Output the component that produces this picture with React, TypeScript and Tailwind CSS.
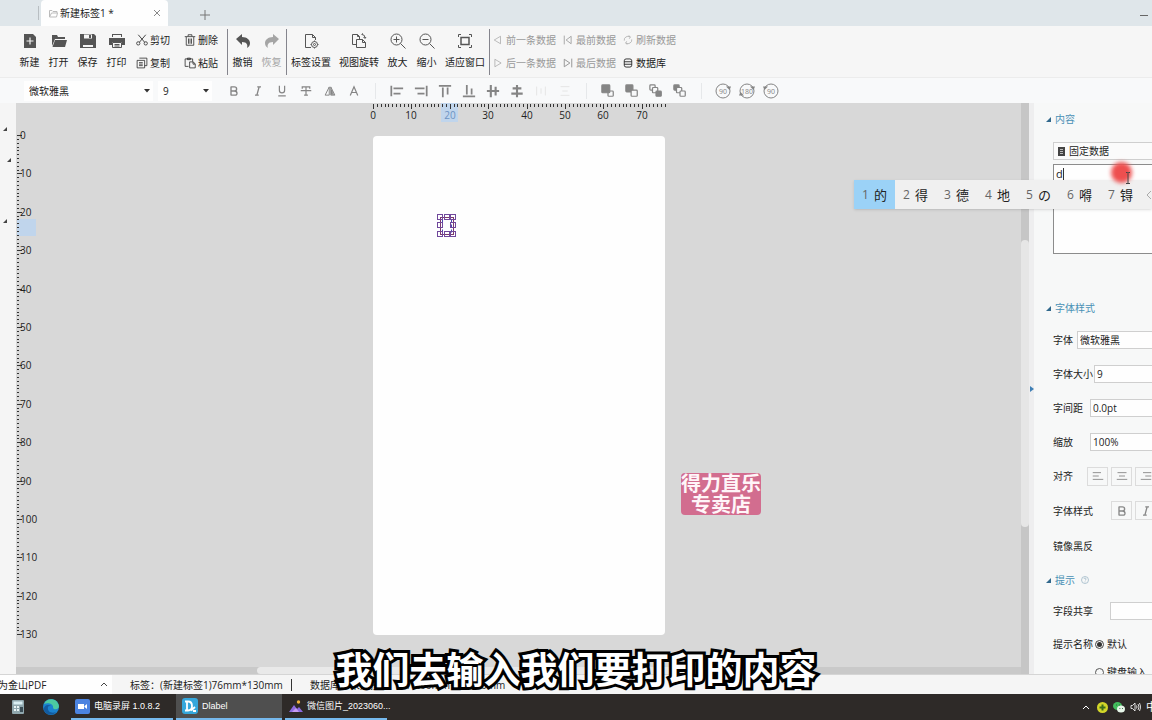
import type { ReactNode } from "react"

const PX_PER_MM = 3.84

type IconProps = { children: ReactNode; size?: string; box?: number; fill?: boolean }

function Icon({ children, size = "w-4 h-4", box = 16, fill = false }: IconProps) {
  return (
    <svg
      viewBox={`0 0 ${box} ${box}`}
      className={`${size} shrink-0`}
      fill={fill ? "currentColor" : "none"}
      stroke={fill ? "none" : "currentColor"}
      strokeWidth={1}
      aria-hidden="true"
    >
      {children}
    </svg>
  )
}

const icons = {
  add: (
    <Icon fill>
      <path d="M2 1h9l3 3v11H2z" />
      <path d="M8 4.500v7M4.500 8h7" stroke="#f6f6f6" strokeWidth="1.200" />
    </Icon>
  ),
  open: (
    <Icon fill>
      <path d="M1 2h5l1 2h7v2H4L1 13z" />
      <path d="M4 7h12l-2 7H1.500z" />
    </Icon>
  ),
  save: (
    <Icon fill>
      <path d="M0 1h14l2 2v12H0z" />
      <path d="M4 1.500h8v4H4zM3 9h10v5H3z" fill="#f6f6f6" />
      <path d="M9 2h2v3H9zM3 9h10v3H3z" />
    </Icon>
  ),
  print: (
    <Icon fill>
      <path d="M3 1h10v3H3zM0 5h16v7h-3V9H3v3H0z" />
      <path d="M3.500 9.500h9v5h-9z" fill="#f6f6f6" stroke="currentColor" />
      <path d="M5.500 11h5v1h-5zM5.500 12.500h5v1h-5z" />
      <path d="M4 2h8v2H4z" fill="#f6f6f6" />
    </Icon>
  ),
  undo: (
    <Icon fill>
      <path d="M1 6l6-5v3c5 0 8 3 8 6 0 2-1 4-3 5 1-3 0-6-5-6v3z" />
    </Icon>
  ),
  redo: (
    <Icon fill>
      <path d="M15 6L9 1v3C4 4 1 7 1 10c0 2 1 4 3 5-1-3 0-6 5-6v3z" />
    </Icon>
  ),
  labelSet: (
    <Icon>
      <path d="M8 14.500H2.500v-13h7l3 3V7M9.500 1.500v3h3" />
      <circle cx="11.500" cy="11.500" r="3" />
      <circle cx="11.500" cy="11.500" r="1" />
      <path d="M11.500 7.500v1M11.500 14.500v1M7.500 11.500h1M14.500 11.500h1" />
    </Icon>
  ),
  viewRotate: (
    <Icon>
      <path d="M5 11.500H1.500v-10h5l2 2V6M6.500 1.500v2h2" />
      <path d="M5.500 6.500h6l3 3v5h-9zM11.500 6.500v3h3M11 1.500q3 0 3 3.500M10.500 1.500l1.500-1M12.500 4l1.500 1.500 1-1.500" />
    </Icon>
  ),
  zoomIn: (
    <Icon>
      <circle cx="6.500" cy="6.500" r="5.500" />
      <path d="M10.500 10.500l5 5M6.500 3.500v6M3.500 6.500h6" />
    </Icon>
  ),
  zoomOut: (
    <Icon>
      <circle cx="6.500" cy="6.500" r="5.500" />
      <path d="M10.500 10.500l5 5M3.500 6.500h6" />
    </Icon>
  ),
  fit: (
    <Icon>
      <path d="M4 4.500h8v7H4z" strokeWidth="1.500" />
      <path d="M1.500 4V1.500H4M12 1.500h2.500V4M14.500 12v2.500H12M4 14.500H1.500V12" />
    </Icon>
  ),
  cut: (
    <Icon size="w-3 h-3">
      <circle cx="3" cy="12.500" r="2.200" />
      <circle cx="13" cy="12.500" r="2.200" />
      <path d="M4.500 11L13 1M11.500 11L3 1" strokeWidth="1.100" />
    </Icon>
  ),
  copy: (
    <Icon size="w-3 h-3">
      <path d="M4.500 1.500h10v10h-3M1.500 4.500h10v10h-10zM4 7.500h5M4 9.500h5M4 11.500h5" />
    </Icon>
  ),
  trash: (
    <Icon size="w-3 h-3">
      <path d="M1 3.500h14M5.500 3V1h5v2M3 4v11h10V4M6 6v7M8 6v7M10 6v7" />
    </Icon>
  ),
  paste: (
    <Icon size="w-3 h-3">
      <path d="M6 12.500H1.500v-10h10V6M4.500 1.500h4v2h-4zM7.500 6.500h5l2.500 3v5H7.500zM12 6.500v3h3" />
    </Icon>
  ),
  prev: (
    <Icon size="w-2.5 h-2.5">
      <path d="M12 2v12L2 8z" />
    </Icon>
  ),
  next: (
    <Icon size="w-2.5 h-2.5">
      <path d="M3 2v12l10-6z" />
    </Icon>
  ),
  first: (
    <Icon size="w-2.5 h-2.5">
      <path d="M13 2v12L5 8zM2 1v14" strokeWidth="1.300" />
    </Icon>
  ),
  last: (
    <Icon size="w-2.5 h-2.5">
      <path d="M2 2v12l9-6zM14 1v14" strokeWidth="1.600" />
    </Icon>
  ),
  refresh: (
    <Icon size="w-2.5 h-2.5">
      <path d="M2 9a6 6 0 0 1 9-6M14 7a6 6 0 0 1-9 6M9 1l3 2-2 3M7 15l-3-2 2-3" />
    </Icon>
  ),
  database: (
    <Icon size="w-2.5 h-2.5">
      <rect x="2" y="1.500" width="12" height="13" rx="3" strokeWidth="1.400" />
      <path d="M2 6h12M2 10h12" strokeWidth="1.400" />
    </Icon>
  ),
}

const fileTools = [
  { label: "新建", icon: icons.add },
  { label: "打开", icon: icons.open },
  { label: "保存", icon: icons.save },
  { label: "打印", icon: icons.print },
]

const editTools = [
  { label: "剪切", icon: icons.cut },
  { label: "删除", icon: icons.trash },
  { label: "复制", icon: icons.copy },
  { label: "粘贴", icon: icons.paste },
]

const viewTools = [
  { label: "标签设置", icon: icons.labelSet, wide: true },
  { label: "视图旋转", icon: icons.viewRotate, wide: true },
  { label: "放大", icon: icons.zoomIn },
  { label: "缩小", icon: icons.zoomOut },
  { label: "适应窗口", icon: icons.fit, wide: true },
]

const dataTools = [
  { label: "前一条数据", icon: icons.prev },
  { label: "最前数据", icon: icons.first },
  { label: "刷新数据", icon: icons.refresh },
  { label: "后一条数据", icon: icons.next },
  { label: "最后数据", icon: icons.last },
  { label: "数据库", icon: icons.database, active: true },
]

const textFormats = [
  { name: "加粗", d: "M4 2v12M4 2.500h4.500q3 0 3 2.700T8.500 8H4M8.500 8q3.500 0 3.500 3t-3.500 2.500H4", w: 1.8 },
  { name: "斜体", d: "M7 2.500h5M4 13.500h5M9.500 2.500l-3 11", w: 1.8 },
  { name: "下划线", d: "M4.500 1v6q0 3.500 3.500 3.500T11.500 7V1M3 14.500h10", w: 1.6 },
  { name: "删除线", d: "M3 5v-2.500h10V5M8 2.500v11M5.500 13.500h5M1 7.500h14", w: 1.6 },
  { name: "镜像", d: "M7 2.500v11H1.500zM9 2.500v11h5.500zM10 13V6M11 13V8M12 13v-3M13 13v-1", w: 1.3 },
  { name: "字形", d: "M3 14L8 2.500 13 14M5 10h6", w: 1.6 },
]

const alignFormats = [
  { name: "左对齐", d: "M1.500 2v12M4 5h11M4 11h8", w: 2 },
  { name: "右对齐", d: "M14.500 2v12M1 5h11M4 11h8", w: 2 },
  { name: "顶对齐", d: "M1 2h14M5.500 4v11M11 4v8", w: 2 },
  { name: "底对齐", d: "M1 14h14M5.500 1v11M11 5v7", w: 2 },
  { name: "垂直居中", d: "M1 8h14M5.500 1v14M11 3v10", w: 2.4 },
  { name: "水平居中", d: "M8 1v14M3 5h10M1.500 11h13", w: 2.4 },
  { name: "横向分布", d: "M3 3v10M8 5v6M13 3v10", w: 1, faint: true },
  { name: "纵向分布", d: "M3 3h10M5 8h6M3 13h10", w: 1, faint: true },
]

// Stacking order buttons, squares as [x, y, size, filled]
const layers: { name: string; squares: [number, number, number, boolean][] }[] = [
  { name: "置于顶层", squares: [[8, 8, 6, false], [1, 1, 9, true]] },
  { name: "置于底层", squares: [[1, 1, 8, true], [7, 7, 7, false]] },
  { name: "上移一层", squares: [[1, 1, 6, false], [4, 4, 6, false], [8, 8, 6, true]] },
  { name: "下移一层", squares: [[1, 1, 6, true], [4, 4, 6, false], [8, 8, 6, false]] },
]

const candidates = ["的", "得", "德", "地", "の", "嘚", "锝"]

function BigButton({ label, icon, wide, muted }: { label: string; icon: ReactNode; wide?: boolean; muted?: boolean }) {
  return (
    <button
      className={`flex flex-col items-center gap-[5px] whitespace-nowrap ${wide ? "w-12" : "w-[29px]"} ${
        muted ? "text-[#a5a5a5]" : "text-[#555]"
      }`}
    >
      {icon}
      <span className={muted ? "leading-4" : "leading-4 text-[#222]"}>{label}</span>
    </button>
  )
}

function Divider() {
  return <div className="w-px self-stretch bg-[#85858d]" />
}

function FormatSeparator() {
  return <div className="mx-[9px] h-4 w-px bg-[#e6e8ea]" />
}

function FormatButton({ name, children, faint }: { name: string; children: ReactNode; faint?: boolean }) {
  return (
    <button aria-label={name} className={`flex w-6 justify-center ${faint ? "text-[#e2e2e2]" : "text-[#858585]"}`}>
      {children}
    </button>
  )
}

function RotateIcon({ text, flip, both }: { text: string; flip?: boolean; both?: boolean }) {
  return (
    <svg viewBox="0 0 18 18" className="h-[18px] w-[18px]" fill="none" stroke="currentColor" aria-hidden="true">
      <circle cx="9" cy="9" r="7" />
      {!flip && <path d="M12 4.500h5l-1.500 3.500z" fill="currentColor" stroke="none" />}
      {flip && <path d="M6 4.500H1L2.500 8z" fill="currentColor" stroke="none" />}
      {both && <path d="M6 13.500H1L2.500 10z" fill="currentColor" stroke="none" />}
      <text x="9" y="11.500" textAnchor="middle" fontSize="7" fill="currentColor" stroke="none">
        {text}
      </text>
    </svg>
  )
}

function Toolbar() {
  return (
    <div className="flex h-[51px] items-center bg-[#f6f6f6] pl-[15px]">
      <div className="flex">
        {fileTools.map((t) => (
          <BigButton key={t.label} {...t} />
        ))}
      </div>
      <div className="ml-[5px] grid grid-cols-[48px_auto] gap-y-[7px] pr-2">
        {editTools.map((t) => (
          <button key={t.label} className="flex items-center gap-[2px] leading-4 text-[#222]">
            {t.icon}
            {t.label}
          </button>
        ))}
      </div>
      <div className="ml-px flex h-[46px] items-center">
        <Divider />
        <BigButton label="撤销" icon={icons.undo} />
        <BigButton label="恢复" icon={icons.redo} muted />
        <Divider />
        {viewTools.map((t) => (
          <BigButton key={t.label} {...t} />
        ))}
        <Divider />
      </div>
      <div className="ml-[3px] grid grid-cols-[70px_60px_auto] gap-y-[7px] whitespace-nowrap">
        {dataTools.map((t) => (
          <button
            key={t.label}
            className={`flex items-center gap-[3px] leading-4 ${t.active ? "text-[#222]" : "text-[#999]"}`}
          >
            {t.icon}
            {t.label}
          </button>
        ))}
      </div>
    </div>
  )
}

function SelectBox({ label, value, className }: { label: string; value: string; className: string }) {
  return (
    <div className={`flex items-center bg-[#fefefe] ${className}`}>
      <select aria-label={label} className="min-w-0 flex-1 appearance-none bg-transparent pl-[5px] text-[#222]">
        <option>{value}</option>
      </select>
      <svg viewBox="0 0 6 4" className="mr-[3px] h-1 w-1.5" fill="#333" aria-hidden="true">
        <path d="M0 0h6L3 3.500z" />
      </svg>
    </div>
  )
}

function FormatBar() {
  return (
    <div className="flex h-[26px] items-center border-t border-[#ececec] bg-[#f8f9fa] pl-6">
      <SelectBox label="字体" value="微软雅黑" className="h-5 w-[129px]" />
      <SelectBox label="字号" value="9" className="ml-[5px] mr-[10px] h-5 w-[54px]" />
      {textFormats.map((f) => (
        <FormatButton key={f.name} name={f.name}>
          <Icon size="w-3 h-3">
            <path d={f.d} strokeWidth={f.w} />
          </Icon>
        </FormatButton>
      ))}
      <FormatSeparator />
      {alignFormats.map((f) => (
        <FormatButton key={f.name} name={f.name} faint={f.faint}>
          <Icon size="w-[14px] h-[14px]">
            <path d={f.d} strokeWidth={f.w} />
          </Icon>
        </FormatButton>
      ))}
      <FormatSeparator />
      {layers.map((l) => (
        <FormatButton key={l.name} name={l.name}>
          <Icon size="w-[14px] h-[14px]">
            {l.squares.map(([x, y, size, filled], i) => (
              <rect
                key={i}
                x={x}
                y={y}
                width={size}
                height={size}
                rx="1"
                fill={filled ? "currentColor" : "#f8f9fa"}
                strokeWidth="1.400"
              />
            ))}
          </Icon>
        </FormatButton>
      ))}
      <FormatSeparator />
      <FormatButton name="旋转90">
        <RotateIcon text="90" />
      </FormatButton>
      <FormatButton name="旋转180">
        <RotateIcon text="180" both />
      </FormatButton>
      <FormatButton name="反向旋转90">
        <RotateIcon text="90" flip />
      </FormatButton>
    </div>
  )
}

function HorizontalRuler() {
  const marks = Array.from({ length: 77 }, (_, mm) => mm)
  return (
    <svg className="h-[33px] w-full overflow-visible" aria-hidden="true">
      <rect x="68" y="0" width="17" height="19" fill="#c0d5ec" />
      {marks.map((mm) => (
        <rect
          key={mm}
          x={Math.round(mm * PX_PER_MM)}
          y={1}
          width="1"
          height={mm % 10 === 0 ? 5 : 3}
          fill="#333"
        />
      ))}
      {marks
        .filter((mm) => mm % 10 === 0)
        .map((mm) => (
          <text
            key={mm}
            x={Math.round(mm * PX_PER_MM)}
            y="16"
            textAnchor="middle"
            fontSize="10"
            fill={mm === 20 ? "#6d93c4" : "#222"}
          >
            {mm}
          </text>
        ))}
    </svg>
  )
}

function VerticalRuler() {
  const marks = Array.from({ length: 131 }, (_, mm) => mm)
  return (
    <svg className="h-full w-8" aria-hidden="true">
      <rect x="1" y="116" width="19" height="17" fill="#c0d5ec" />
      {marks.map((mm) => (
        <rect
          key={mm}
          x="1"
          y={Math.round(mm * PX_PER_MM) + 32}
          width={mm % 10 === 0 ? 5 : 2}
          height="1"
          fill="#333"
        />
      ))}
      {marks
        .filter((mm) => mm % 10 === 0)
        .map((mm) => (
          <text key={mm} x="4" y={Math.round(mm * PX_PER_MM) + 36} fontSize="10" fill="#222">
            {mm}
          </text>
        ))}
    </svg>
  )
}

function Selection() {
  const handles = [
    [0, 0], [7, 0], [13, 0],
    [0, 8], [13, 8],
    [0, 17], [7, 17], [13, 17],
  ]
  return (
    <svg
      viewBox="0 0 20 24"
      className="absolute left-16 top-[78px] h-6 w-5"
      fill="none"
      stroke="#70489c"
      aria-hidden="true"
    >
      <rect x="3.500" y="3.500" width="13" height="17" stroke="#7d3b6b" />
      <path d="M5.500 5.500v13M14.500 5.500v13" stroke="#4a4ab0" strokeDasharray="3 2" />
      {handles.map(([x, y]) => (
        <rect key={`${x}-${y}`} x={x + 0.5} y={y + 0.5} width="5" height="5" />
      ))}
    </svg>
  )
}

function Workspace() {
  return (
    <div className="flex min-w-0 flex-1 flex-col bg-[#d8d8d8]">
      <div className="relative flex min-h-0 flex-1">
        <VerticalRuler />
        <div className="flex flex-1 justify-center">
          <div className="w-[292px]">
            <HorizontalRuler />
            <div className="relative h-[499px] rounded-sm bg-[#fefefe]">
              <Selection />
            </div>
          </div>
        </div>
        <div className="w-8" />
        <div className="absolute right-[260px] top-[370px] rounded bg-[#d26d8f] text-center text-[20px] font-bold leading-[21px] text-[#fff5f8]">
          得力直乐
          <br />
          专卖店
        </div>
      </div>
      <div className="flex h-[7px] justify-center bg-[#c9c9c9]">
        <div className="w-[52%] rounded-sm bg-[#e9e9e9]" />
      </div>
    </div>
  )
}

function SectionTitle({ children, className }: { children: ReactNode; className: string }) {
  return (
    <h2 className={`flex items-center gap-1 pl-3 text-[#4990b5] ${className}`}>
      <svg viewBox="0 0 5 5" className="h-[5px] w-[5px]" fill="#31688c" aria-hidden="true">
        <path d="M5 0v5H0z" />
      </svg>
      {children}
    </h2>
  )
}

function Field({ id, label, value, width }: { id: string; label: string; value: string; width: string }) {
  return (
    <div className="flex h-[34px] items-center pl-[19px]">
      <label htmlFor={id} className={`shrink-0 ${width}`}>
        {label}
      </label>
      <input
        id={id}
        defaultValue={value}
        className="h-[18px] w-24 shrink-0 border border-[#cfcfcf] bg-[#fefefe] px-0.5"
      />
    </div>
  )
}

function SquareButton({ name, d, w = 1.2 }: { name: string; d: string; w?: number }) {
  return (
    <button
      aria-label={name}
      className="flex h-[19px] w-[21px] shrink-0 items-center justify-center border border-[#dcdcdc] text-[#888]"
    >
      <Icon size="w-3 h-3">
        <path d={d} strokeWidth={w} />
      </Icon>
    </button>
  )
}

function PropertyPanel() {
  return (
    <aside className="w-[118px] shrink-0 overflow-hidden whitespace-nowrap bg-[#f7f8f8] text-[#222]">
      <SectionTitle className="h-8">内容</SectionTitle>
      <div className="mt-[7px] flex w-48 flex-col gap-1 pl-[19px]">
        <button className="flex h-[18px] items-center gap-1 border border-[#cfcfcf] bg-[#fbfbfb] pl-1">
          <svg viewBox="0 0 7 9" className="h-[9px] w-[7px]" aria-hidden="true">
            <path d="M0 0h7v9H0z" fill="#444" />
            <path d="M2 2.500h3M2 4.500h3M2 6.500h3" stroke="#bbb" />
          </svg>
          固定数据
        </button>
        <textarea
          aria-label="数据内容"
          defaultValue="d"
          className="block h-[90px] resize-none border border-[#8c8c8c] bg-[#fefefe] px-[2px] py-px text-[11px] leading-4"
        />
      </div>

      <SectionTitle className="mt-[39px] h-[30px]">字体样式</SectionTitle>
      <div className="flex h-[34px] items-center pl-[19px]">
        <label htmlFor="font" className="w-6 shrink-0">
          字体
        </label>
        <select id="font" className="h-[18px] w-28 shrink-0 appearance-none border border-[#cfcfcf] bg-[#fefefe] px-0.5">
          <option>微软雅黑</option>
        </select>
      </div>
      <Field id="size" label="字体大小" value="9" width="w-[41px]" />
      <Field id="spacing" label="字间距" value="0.0pt" width="w-[37px]" />
      <Field id="scale" label="缩放" value="100%" width="w-[37px]" />
      <div className="flex h-[34px] items-center gap-[3px] pl-[19px]">
        <span className="w-[31px] shrink-0">对齐</span>
        <SquareButton name="居左" d="M1 3.500h11M1 8h8M1 12.500h14" />
        <SquareButton name="居中" d="M2 3.500h12M4 8h8M1 12.500h14" />
        <SquareButton name="居右" d="M4 3.500h11M7 8h8M1 12.500h14" />
      </div>
      <div className="flex h-[35px] items-center gap-[3px] pl-[19px]">
        <span className="w-[55px] shrink-0">字体样式</span>
        <SquareButton name="粗体" d={textFormats[0].d} w={1.8} />
        <SquareButton name="倾斜" d={textFormats[1].d} w={1.8} />
      </div>
      <div className="flex h-[35px] items-center pl-[19px]">镜像黑反</div>

      <SectionTitle className="h-[34px]">
        提示
        <svg viewBox="0 0 8 8" className="ml-0.5 h-2 w-2" fill="none" stroke="#9fb9c8" strokeWidth="0.800" aria-hidden="true">
          <circle cx="4" cy="4" r="3.500" />
          <path d="M3 3q0-1 1-1t1 1-1 1.500M4 5.500v.800" />
        </svg>
      </SectionTitle>
      <div className="-my-[3px]">
        <Field id="share" label="字段共享" value="" width="w-[57px]" />
      </div>
      <fieldset className="pl-[19px]">
        <div className="flex h-[38px] items-center">
          <span className="w-[42px]">提示名称</span>
          <label className="flex items-center gap-[3px]">
            <input
              type="radio"
              name="hint"
              defaultChecked
              className="h-[9px] w-[9px] appearance-none rounded-full border border-[#444] bg-[#333] bg-clip-content p-px"
            />
            默认
          </label>
        </div>
        <label className="ml-[42px] flex h-[18px] items-center gap-[3px]">
          <input type="radio" name="hint" className="h-[9px] w-[9px] appearance-none rounded-full border border-[#555]" />
          键盘输入
        </label>
      </fieldset>
    </aside>
  )
}

function LeftStrip() {
  return (
    <div className="flex w-4 shrink-0 flex-col bg-[#f5f5f5] pl-[3px] pt-6 text-[#444]">
      {["mb-[27px]", "mb-[57px] ml-1", ""].map((gap, i) => (
        <svg key={i} viewBox="0 0 4 4" className={`h-1 w-1 ${gap}`} fill="currentColor" aria-hidden="true">
          <path d="M4 0v4H0z" />
        </svg>
      ))}
    </div>
  )
}

function StatusBar() {
  return (
    <footer className="flex h-5 shrink-0 items-center whitespace-nowrap border-t border-[#d5d5d5] bg-[#f5f5f5] text-[#222]">
      <button className="flex h-full w-28 items-center justify-between bg-[#fefefe] pr-1">
        <span className="-ml-0.5">为金山PDF</span>
        <svg viewBox="0 0 8 5" className="h-[5px] w-2" fill="none" stroke="#444" aria-hidden="true">
          <path d="M1 4l3-3 3 3" />
        </svg>
      </button>
      <span className="ml-[18px] w-[161px]">标签：(新建标签1)76mm*130mm</span>
      <span className="h-3 w-px bg-[#333]" />
      <span className="ml-[18px] w-24">数据库：未连接</span>
      <span>76.00mm*130.00mm</span>
    </footer>
  )
}

function Task({ label, icon, active }: { label: string; icon: ReactNode; active?: boolean }) {
  return (
    <button
      className={`flex h-full items-center gap-1 border-b-2 border-[#76b9ed] text-white ${
        active ? "w-[106px] bg-[#4f4f4f] pl-1.5" : "w-[102px] pl-1"
      }`}
    >
      {icon}
      {label}
    </button>
  )
}

function Taskbar() {
  return (
    <nav className="flex h-[26px] shrink-0 items-center whitespace-nowrap bg-[#2e2a28] pl-3 font-['Liberation_Sans','Noto_Sans_CJK_SC',sans-serif] text-[9px] text-white">
      <svg viewBox="0 0 12 14" className="h-[14px] w-3" aria-hidden="true">
        <rect width="12" height="14" rx="1" fill="#8fa6ad" />
        <path d="M1.500 1.500h9v3h-9z" fill="#d9eef3" />
        <path d="M2 6h2v2H2zM5 6h2v2H5zM2 9h2v2H2zM5 9h2v2H5z" fill="#e8f3f5" />
        <path d="M8 7h3v5H8z" fill="#3a4c55" />
      </svg>
      <svg viewBox="0 0 16 16" className="ml-[19px] h-4 w-4" aria-hidden="true">
        <circle cx="8" cy="8" r="8" fill="#1b82cf" />
        <path d="M1 5C3-1 14-2 16 7c0 4-5 4-6 2 1-4-5-6-9-4z" fill="#4cc9a0" />
        <path d="M5 8c-1 4 3 7 8 5-4 5-13 2-12-4 1-3 4-4 7-2-2 0-3 0-3 1z" fill="#135b9f" />
      </svg>
      <div className="ml-3 flex h-full gap-[3px]">
        <Task
          label="电脑录屏 1.0.8.2"
          icon={
            <svg viewBox="0 0 15 15" className="h-[15px] w-[15px] shrink-0" aria-hidden="true">
              <rect width="15" height="15" rx="2" fill="#4b83e0" />
              <path d="M3 5h6v5H3zM9.500 7L12 5v5L9.500 8z" fill="#fff" />
            </svg>
          }
        />
        <Task
          label="Dlabel"
          active
          icon={
            <svg viewBox="0 0 16 16" className="h-4 w-4 shrink-0" aria-hidden="true">
              <rect width="16" height="16" rx="3" fill="#35a7dc" />
              <path d="M3 3.500h3q4 0 4 4.500t-4 4.500H3M5 4v8M9 12.500l4-3.500M11 13h3" fill="none" stroke="#fff" strokeWidth="1.800" />
            </svg>
          }
        />
        <Task
          label="微信图片_2023060..."
          icon={
            <svg viewBox="0 0 14 12" className="h-3 w-[14px] shrink-0" aria-hidden="true">
              <path d="M0 12l5-7 3 4 2-2 4 5z" fill="#8d6be0" />
              <path d="M3 12l4-4 3 4z" fill="#c79cf3" />
              <circle cx="9.500" cy="2" r="1.700" fill="#f0b43c" />
            </svg>
          }
        />
      </div>
      <div className="ml-auto flex items-center gap-[5px]">
        <svg viewBox="0 0 8 5" className="h-[5px] w-2" fill="none" stroke="#fff" aria-hidden="true">
          <path d="M1 4l3-3 3 3" />
        </svg>
        <svg viewBox="0 0 11 11" className="ml-0.5 h-[11px] w-[11px]" aria-hidden="true">
          <circle cx="5.500" cy="5.500" r="5.500" fill="#d3d629" />
          <path d="M5.500 2.500v6M2.500 5.500h6" stroke="#3c6e1c" strokeWidth="2" />
        </svg>
        <svg viewBox="0 0 12 11" className="h-[11px] w-3" aria-hidden="true">
          <ellipse cx="4.500" cy="4" rx="4.500" ry="4" fill="#43bd5d" />
          <ellipse cx="8" cy="7" rx="4" ry="3.500" fill="#e7f6e9" />
          <path d="M3 3h.8M6 3h.8M6.500 6.500h.8M9 6.500h.8" stroke="#245c31" />
        </svg>
        <svg viewBox="0 0 11 10" className="h-2.5 w-[11px]" fill="none" stroke="#eee" strokeWidth="0.900" aria-hidden="true">
          <path d="M1 3.500h1.500L5 1v8L2.500 6.500H1zM6.500 3.500q1 1.500 0 3M8 2q2 3 0 6M9.500 1q2.500 4 0 8" />
        </svg>
        <span className="w-1.5 overflow-hidden text-[11px]">中</span>
      </div>
    </nav>
  )
}

export default function App() {
  return (
    <div className="relative flex h-screen flex-col overflow-hidden bg-[#f6f6f6] font-['Open_Sans','Noto_Sans_CJK_SC',sans-serif] text-[10px] leading-4">
      {/* Document tabs */}
      <header className="flex h-[26px] shrink-0 items-center bg-[#dfe6ea] pl-[38px] text-[#222]">
        <div className="h-[14px] w-px bg-[#b8bec2]" />
        <div className="ml-0.5 flex h-full w-[127px] items-center gap-0.5 rounded-t-sm bg-[#fefefe] px-2">
          <svg viewBox="0 0 9 9" className="h-[9px] w-[9px]" fill="none" stroke="#bbb" aria-hidden="true">
            <path d="M.500 8V1.500H3l1 1h4V4M.500 8h7l1-4h-6z" />
          </svg>
          <span className="flex-1">新建标签1 *</span>
          <button aria-label="关闭标签">
            <svg viewBox="0 0 6 6" className="h-1.5 w-1.5" stroke="#888" aria-hidden="true">
              <path d="M0 0l6 6M6 0L0 6" />
            </svg>
          </button>
        </div>
        <button aria-label="新建标签页" className="ml-8">
          <svg viewBox="0 0 10 10" className="mt-1 h-2.5 w-2.5" stroke="#777" aria-hidden="true">
            <path d="M5 0v10M0 5h10" />
          </svg>
        </button>
        <button aria-label="最小化" className="ml-auto mr-1 mt-1 h-px w-2 bg-[#666]" />
      </header>

      <Toolbar />
      <FormatBar />

      <main className="relative flex min-h-0 flex-1">
        <LeftStrip />
        <Workspace />
        <div className="w-2 shrink-0 bg-[#c6c6c6] pt-[137px]">
          <div className="h-[287px] rounded-sm bg-[#e6e6e6]" />
        </div>
        <button aria-label="收起面板" className="flex w-[5px] shrink-0 items-center justify-end bg-[#eeeeef]">
          <svg viewBox="0 0 4 6" className="h-1.5 w-1" fill="#3f7fb5" aria-hidden="true">
            <path d="M0 0l4 3-4 3z" />
          </svg>
        </button>
        <PropertyPanel />

        {/* Input method candidates */}
        <div className="absolute right-0 top-[77px] flex h-[29px] w-[298px] items-center overflow-hidden bg-[#f0f0f0] text-[13px] text-[#222] shadow-sm">
          {candidates.map((c, i) => (
            <span
              key={c}
              className={`flex h-full w-[41px] shrink-0 items-center justify-center gap-[5px] ${
                i === 0 ? "bg-[#9bd2f7]" : ""
              }`}
            >
              <span className="text-[12px] text-[#666]">{i + 1}</span>
              {c}
            </span>
          ))}
          <svg viewBox="0 0 4 8" className="ml-1.5 h-2 w-1 shrink-0" fill="none" stroke="#aaa" aria-hidden="true">
            <path d="M4 0L0 4l4 4" />
          </svg>
        </div>

        {/* Caret, click marker and text pointer */}
        <div className="absolute right-[88px] top-[65px] h-3 w-px bg-[#333]" />
        <div className="absolute right-5 top-[59px] h-[21px] w-[21px] rounded-full bg-[#ee4f4f] blur-[2px]" />
        <svg
          viewBox="0 0 6 12"
          className="absolute right-[21px] top-[69px] h-3 w-1.5"
          fill="none"
          stroke="#444"
          aria-hidden="true"
        >
          <path d="M1 .500h1.500l.500.500.500-.500H5M3 1v10M1 11.500h4" />
        </svg>
      </main>

      <StatusBar />
      <Taskbar />

      {/* Subtitle */}
      <p className="absolute inset-x-0 bottom-[26px] text-center text-[37px] font-bold leading-[48px] text-white [-webkit-text-stroke:6px_#000] [paint-order:stroke_fill]">
        我们去输入我们要打印的内容
      </p>
    </div>
  )
}
